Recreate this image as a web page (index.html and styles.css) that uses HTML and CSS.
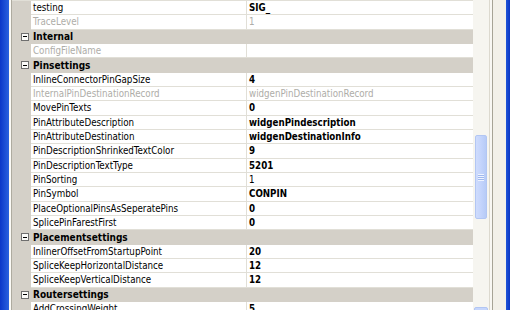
FILE: index.html
```html
<!DOCTYPE html>
<html>
<head>
<meta charset="utf-8">
<link rel="stylesheet" href="styles.css">
</head>
<body>
<div class="window">
  <div class="frame-left"></div>
  <div class="edge-left"></div>
  <div class="grid">
    <div class="row"><span class="gut"></span><span class="name">testing</span><span class="val b">SIG_</span></div>
    <div class="row"><span class="gut"></span><span class="name dis">TraceLevel</span><span class="val dis">1</span></div>
    <div class="cat"><span class="tog"></span><span class="ctext">Internal</span></div>
    <div class="row"><span class="gut"></span><span class="name dis">ConfigFileName</span><span class="val"></span></div>
    <div class="cat"><span class="tog"></span><span class="ctext">Pinsettings</span></div>
    <div class="row"><span class="gut"></span><span class="name">InlineConnectorPinGapSize</span><span class="val b">4</span></div>
    <div class="row"><span class="gut"></span><span class="name dis">InternalPinDestinationRecord</span><span class="val dis">widgenPinDestinationRecord</span></div>
    <div class="row"><span class="gut"></span><span class="name">MovePinTexts</span><span class="val b">0</span></div>
    <div class="row"><span class="gut"></span><span class="name">PinAttributeDescription</span><span class="val b">widgenPindescription</span></div>
    <div class="row"><span class="gut"></span><span class="name">PinAttributeDestination</span><span class="val b">widgenDestinationInfo</span></div>
    <div class="row"><span class="gut"></span><span class="name">PinDescriptionShrinkedTextColor</span><span class="val b">9</span></div>
    <div class="row"><span class="gut"></span><span class="name">PinDescriptionTextType</span><span class="val b">5201</span></div>
    <div class="row"><span class="gut"></span><span class="name">PinSorting</span><span class="val">1</span></div>
    <div class="row"><span class="gut"></span><span class="name">PinSymbol</span><span class="val b">CONPIN</span></div>
    <div class="row"><span class="gut"></span><span class="name">PlaceOptionalPinsAsSeperatePins</span><span class="val b">0</span></div>
    <div class="row"><span class="gut"></span><span class="name">SplicePinFarestFirst</span><span class="val b">0</span></div>
    <div class="cat"><span class="tog"></span><span class="ctext">Placementsettings</span></div>
    <div class="row"><span class="gut"></span><span class="name">InlinerOffsetFromStartupPoint</span><span class="val b">20</span></div>
    <div class="row"><span class="gut"></span><span class="name">SpliceKeepHorizontalDistance</span><span class="val b">12</span></div>
    <div class="row"><span class="gut"></span><span class="name">SpliceKeepVerticalDistance</span><span class="val b">12</span></div>
    <div class="cat"><span class="tog"></span><span class="ctext">Routersettings</span></div>
    <div class="row"><span class="gut"></span><span class="name">AddCrossingWeight</span><span class="val b">5</span></div>
  </div>
  <div class="scroll">
    <div class="thumb"><span class="grip"></span></div>
    <div class="arrow"></div>
  </div>
  <div class="edge-right"></div>
  <div class="frame-right"></div>
</div>
</body>
</html>
```
FILE: styles.css
```css
* { box-sizing: border-box; }
html, body { margin: 0; padding: 0; }
body {
  width: 510px;
  height: 310px;
  overflow: hidden;
  background: #f1efe6;
  font-family: "DejaVu Sans Condensed", "DejaVu Sans", sans-serif;
  font-size: 9.7px;
  color: #000;
}
.window { display: flex; height: 310px; overflow: hidden; }
.frame-left { width: 9px; flex: none; background: linear-gradient(to right, #0b37c9, #2a62df); }
.edge-left { width: 3px; flex: none; background: #fbfaf6; border-right: 1px solid #aeaba0; }
.grid {
  width: 461px;
  flex: none;
  display: flex;
  flex-direction: column;
  background: #d4d0c8;
  border-top: 1px solid #e1dfd7;
}
.row, .cat { display: flex; height: 14.333px; flex: none; }
.gut { width: 19px; flex: none; }
.name, .val {
  background: #fff;
  border-bottom: 1px solid #e1dfd7;
  line-height: 13.333px;
  white-space: nowrap;
  overflow: hidden;
  padding-left: 2px;
}
.name { width: 216px; flex: none; border-right: 1px solid #e1dfd7; }
.val { flex: 1; }
.b { font-weight: bold; }
.dis { color: #aeada8; }
.cat { align-items: center; background: #d4d0c8; }
.tog {
  width: 8px; height: 8px; flex: none;
  margin-left: 9px; margin-right: 4px;
  background: #fbfbf9;
  border: 1px solid #6f6f6f;
  display: flex; align-items: center; justify-content: center;
}
.tog::after { content: ""; width: 4px; height: 1px; background: #000; }
.ctext { font-weight: bold; font-size: 10px; line-height: 13px; }
.scroll {
  width: 16px;
  flex: none;
  display: flex;
  flex-direction: column;
  background: #f6f5f0;
  overflow: hidden;
}
.thumb {
  flex: none;
  margin: 135px 0 0 2px;
  width: 12px;
  height: 84px;
  border: 1px solid #b2c6f3;
  border-radius: 2px;
  background: linear-gradient(to right, #cfdcfd, #c1d2fb 60%, #b7cbf6);
  display: flex; align-items: center; justify-content: center;
}
.grip {
  width: 6px; height: 7px;
  background: repeating-linear-gradient(to bottom, #eef3ff 0 1px, #9fb8ee 1px 2px);
}
.arrow {
  flex: none;
  margin: 88px 0 0 1px;
  width: 14px;
  height: 17px;
  border: 1px solid #b2c6f3;
  border-radius: 2px;
  background: #c6d6fc;
}
.edge-right {
  width: 17px;
  flex: none;
  background: linear-gradient(to right, #dcd9cf 0 1px, #f8f7f3 1px 3px, #a6a396 3px 4px, #f2f0e9 4px);
}
.frame-right { width: 4px; flex: none; background: linear-gradient(to right, #1f55d8, #0a35c4); }
```
